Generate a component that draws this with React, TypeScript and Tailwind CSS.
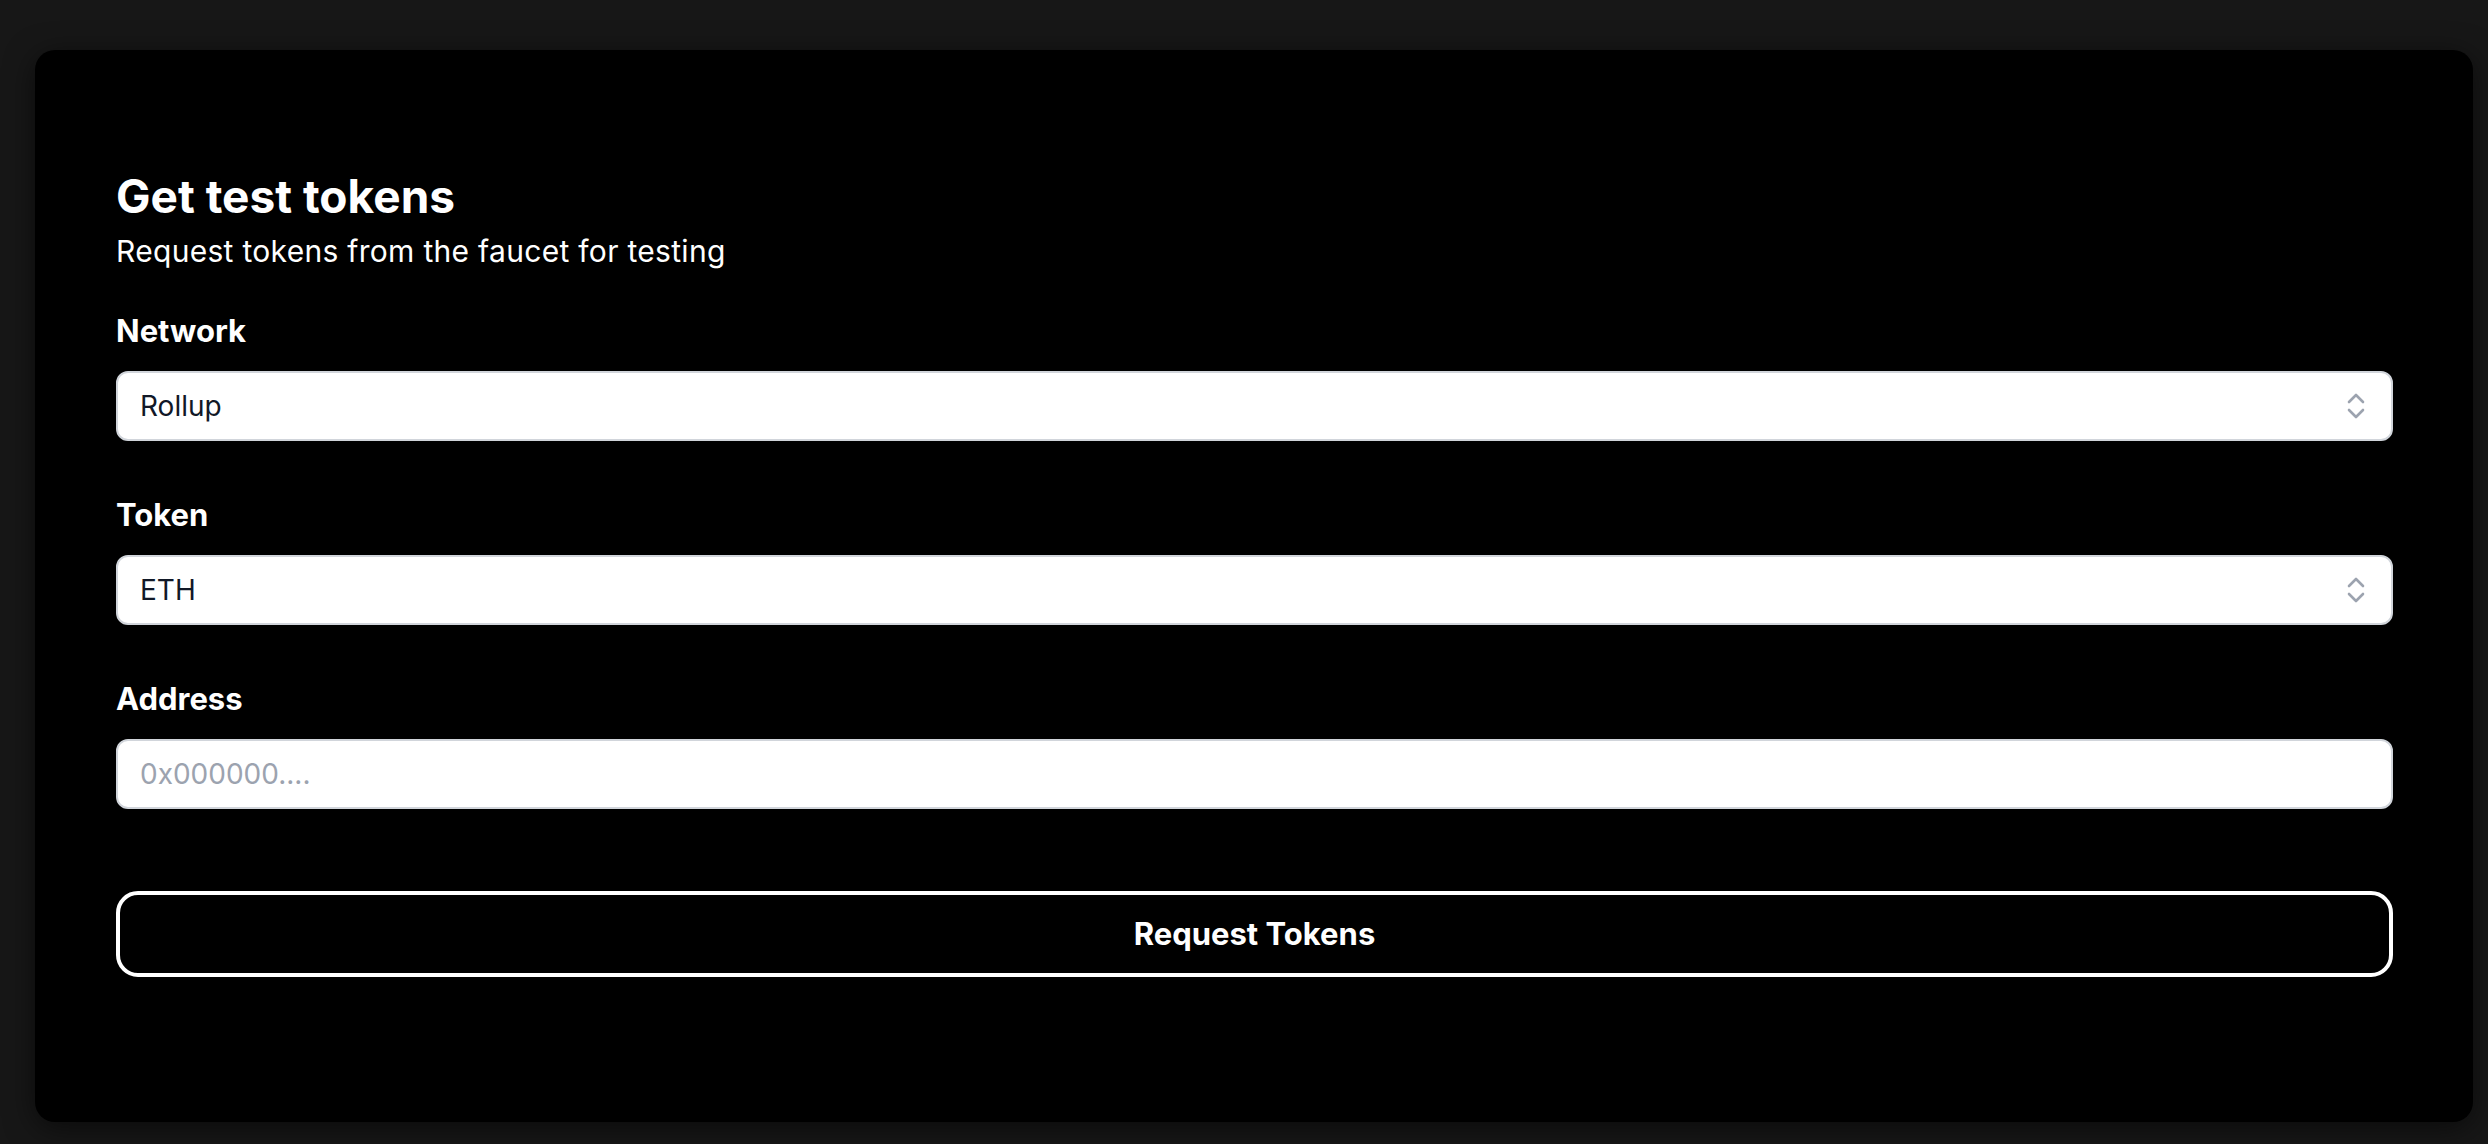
import React from 'react'

const FONT = { fontFamily: 'Inter, "Noto Sans", sans-serif' }

function UpDown() {
  return (
    <svg width="22" height="28" viewBox="0 0 22 28" fill="none" className="shrink-0">
      <path d="M4 10 L11 3 L18 10" stroke="#9ca3af" strokeWidth="2.6" strokeLinecap="round" strokeLinejoin="round" />
      <path d="M4 18 L11 25 L18 18" stroke="#9ca3af" strokeWidth="2.6" strokeLinecap="round" strokeLinejoin="round" />
    </svg>
  )
}

function Field({ label, first, children }: { label: string; first?: boolean; children: React.ReactNode }) {
  return (
    <div className={first ? 'mt-[40px]' : 'mt-[54px]'}>
      <div className="text-[31px] leading-[40px] font-bold text-white">{label}</div>
      <div className="mt-[20px]">{children}</div>
    </div>
  )
}

function SelectBox({ value }: { value: string }) {
  return (
    <div className="h-[70px] bg-white border-2 border-[#d1d5db] rounded-[12px] flex items-center justify-between pl-[22px] pr-[24px]">
      <span className="text-[28px] text-[#111827]">{value}</span>
      <UpDown />
    </div>
  )
}

export default function App() {
  return (
    <div className="min-h-screen bg-[#171717] pl-[35px] pr-[15px] pt-[50px] pb-[22px]" style={FONT}>
      <div className="h-[1072px] bg-black rounded-[20px] shadow-[0_6px_30px_rgba(0,0,0,0.55)] pl-[81px] pr-[80px] pt-[118px]">
        <h1 className="text-[46px] leading-[56px] font-bold text-white">Get test tokens</h1>
        <p className="mt-[7px] text-[30px] leading-[40px] tracking-[0.3px] text-white">Request tokens from the faucet for testing</p>

        <Field label="Network" first>
          <SelectBox value="Rollup" />
        </Field>

        <Field label="Token">
          <SelectBox value="ETH" />
        </Field>

        <Field label="Address">
          <div className="h-[70px] bg-white border-2 border-[#d1d5db] rounded-[12px] flex items-center pl-[22px]">
            <span className="text-[28px] text-[#9ca3af]">0x000000....</span>
          </div>
        </Field>

        <button className="mt-[82px] w-full h-[86px] rounded-[22px] border-[4px] border-white bg-black text-white text-[31px] font-bold">
          Request Tokens
        </button>
      </div>
    </div>
  )
}
